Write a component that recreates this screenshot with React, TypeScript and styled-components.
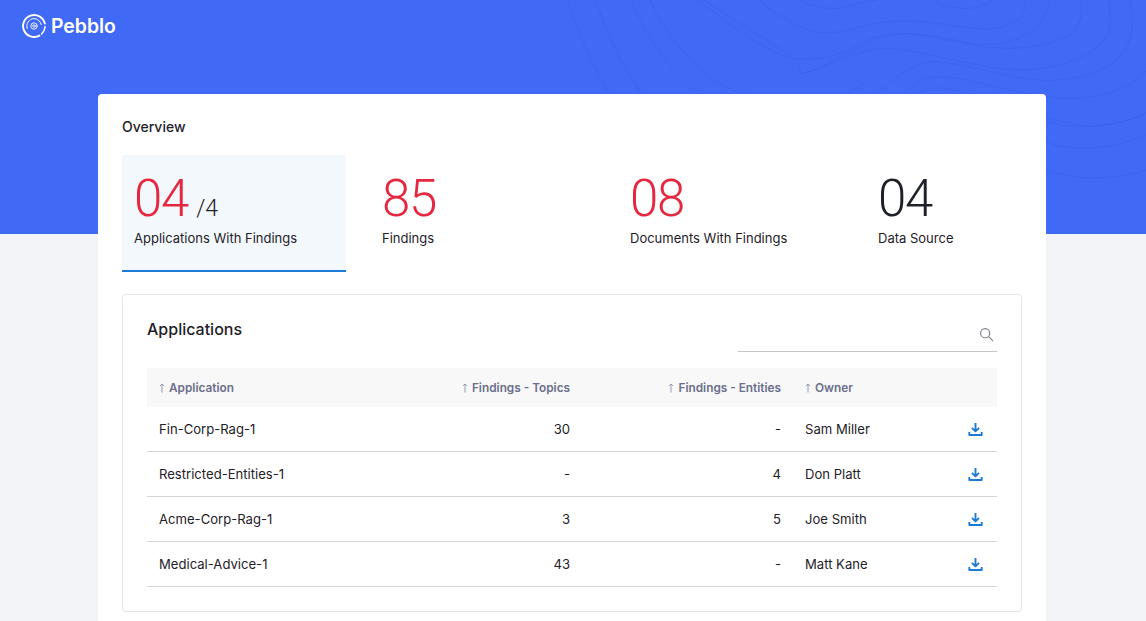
import React from 'react';
import styled, { createGlobalStyle } from 'styled-components';

const GlobalStyle = createGlobalStyle`
html, body {
  margin: 0;
  height: 100%;
  overflow: hidden;
}
body {
  font-family: Inter, "Liberation Sans", sans-serif;
  background: #f3f4f8;
  color: #1f2128;
}
`

const stats = [
    { value: '04', total: '/4', label: 'Applications With Findings', alert: true },
    { value: '85', label: 'Findings', alert: true },
    { value: '08', label: 'Documents With Findings', alert: true },
    { value: '04', label: 'Data Source', alert: false },
];

const apps = [
    { name: 'Fin-Corp-Rag-1', topics: '30', entities: '-', owner: 'Sam Miller' },
    { name: 'Restricted-Entities-1', topics: '-', entities: '4', owner: 'Don Platt' },
    { name: 'Acme-Corp-Rag-1', topics: '3', entities: '5', owner: 'Joe Smith' },
    { name: 'Medical-Advice-1', topics: '43', entities: '-', owner: 'Matt Kane' },
];

const Logo = () => (
    <LogoMark viewBox="0 0 24 24" fill="none" stroke="#fff" strokeLinecap="round">
        <path d="M17.5 21.6A11 11 0 1 1 22.8 9.5" strokeWidth="1.9" />
        <path d="M23 12.5a11 11 0 0 1-3.4 7.4" strokeWidth="1.4" />
        <path d="M5.2 14.5A7.4 7.4 0 0 1 12 4.6a7.4 7.4 0 0 1 7.2 6" strokeWidth="1" />
        <circle cx="12" cy="12" r="3.2" strokeWidth="0.9" />
        <circle cx="12" cy="12" r="1.3" strokeWidth="0.8" />
    </LogoMark>
);

const Contours = () => (
    <ContourSvg viewBox="0 0 1568 642" fill="none" stroke="#3358dc" strokeOpacity="0.55" strokeWidth="1.4">
        <path d="M20 0C50 90 90 190 150 280" />
        <path d="M95 0C130 100 170 190 240 280" />
        <path d="M190 0C230 90 280 180 370 250L490 282" />
        <path d="M240 0C280 80 340 170 430 225C500 265 640 290 730 270C770 258 800 235 825 210" />
        <path d="M370 0C450 60 520 120 600 150C650 165 720 160 780 130C830 100 880 85 930 90C1010 95 1090 130 1180 115C1260 100 1300 60 1310 0" />
        <path d="M385 0C450 40 520 90 590 130C640 165 650 195 640 198C710 185 780 130 860 100C920 85 1000 90 1090 115C1170 135 1280 140 1370 90C1400 60 1395 30 1395 0" />
        <path d="M530 0C580 40 640 80 700 88C760 92 830 55 930 55C1000 55 1100 85 1170 75C1220 65 1250 40 1245 0" />
        <path d="M640 0C670 15 710 25 750 22C800 10 830 0 850 0" />
        <path d="M1000 0C1040 25 1110 35 1160 0" />
        <path d="M640 198C700 190 780 135 860 130C940 125 1050 170 1200 185C1320 195 1450 150 1470 80C1475 50 1470 20 1468 0" />
        <path d="M820 280C870 230 930 170 1000 165C1080 165 1180 210 1300 215C1420 215 1520 170 1530 80C1533 50 1528 20 1525 0" />
        <path d="M895 280C930 240 960 205 1010 205C1090 205 1200 250 1340 262C1450 268 1540 230 1568 190" />
        <path d="M925 280C950 250 970 235 1010 235C1100 240 1220 300 1390 335C1470 345 1540 315 1568 300" />
        <path d="M1300 325C1370 345 1470 345 1568 305" />
        <path d="M1300 380C1370 405 1470 405 1568 360" />
        <path d="M1300 455C1370 480 1470 485 1568 455" />
    </ContourSvg>
);

const ArrowUp = () => (
    <SortIcon viewBox="0 0 6 10" fill="none" stroke="#8d90a8" strokeWidth="0.9">
        <path d="M3 9.5V1M1 3l2-2 2 2" />
    </SortIcon>
);

const SearchIcon = () => (
    <SearchSvg viewBox="0 0 16 16" fill="none" stroke="#7f8188" strokeWidth="1.2" strokeLinecap="round">
        <circle cx="6.6" cy="6.6" r="4.9" />
        <path d="M10.3 10.3L14.6 14.6" />
    </SearchSvg>
);

const DownloadIcon = () => (
    <DownloadSvg viewBox="0 0 16 16" fill="none" stroke="#1d7ad6" strokeWidth="2" strokeLinejoin="round">
        <path d="M8 1v8.6M4.2 6.2L8 10l3.8-3.8" />
        <path d="M1.4 10.6v3.2h13.2v-3.2" />
    </DownloadSvg>
);

export default function App() {
    return (
        <Page>
            <GlobalStyle />
            <Contours />
            <Header>
                <Logo />
                <Brand>Pebblo</Brand>
            </Header>
            <Card>
                <Heading>Overview</Heading>
                <Stats>
                    {stats.map((stat, id) => (
                        <Stat key={stat.label} active={id === 0}>
                            <Numbers>
                                <Value alert={stat.alert}>{stat.value}</Value>
                                {stat.total && <Total>{stat.total}</Total>}
                            </Numbers>
                            <StatLabel>{stat.label}</StatLabel>
                        </Stat>
                    ))}
                </Stats>
                <Panel>
                    <PanelHead>
                        <PanelTitle>Applications</PanelTitle>
                        <Search>
                            <SearchIcon />
                        </Search>
                    </PanelHead>
                    <Table>
                        <colgroup>
                            <col width="253" />
                            <col width="182" />
                            <col width="211" />
                            <col width="157" />
                            <col width="47" />
                        </colgroup>
                        <thead>
                            <tr>
                                <Th><ArrowUp />Application</Th>
                                <Th right><ArrowUp />Findings - Topics</Th>
                                <Th right><ArrowUp />Findings - Entities</Th>
                                <Th><ArrowUp />Owner</Th>
                                <Th />
                            </tr>
                        </thead>
                        <tbody>
                            {apps.map((app) => (
                                <tr key={app.name}>
                                    <Td>{app.name}</Td>
                                    <Td right>{app.topics}</Td>
                                    <Td right>{app.entities}</Td>
                                    <Td>{app.owner}</Td>
                                    <Td><DownloadIcon /></Td>
                                </tr>
                            ))}
                        </tbody>
                    </Table>
                </Panel>
            </Card>
        </Page>
    );
}

const Page = styled.div`
position: relative;
height: 100vh;
overflow: hidden;
background: linear-gradient(#4069f5 234px, #f3f4f8 234px);
`
const ContourSvg = styled.svg`
position: absolute;
top: 0;
left: 560px;
width: 586px;
height: 240px;
`
const Header = styled.header`
position: relative;
height: 94px;
box-sizing: border-box;
padding: 14px 22px 0;
display: flex;
align-items: flex-start;
gap: 5px;
`
const LogoMark = styled.svg`
width: 24px;
height: 24px;
`
const Brand = styled.span`
font-size: 19.4px;
line-height: 24px;
font-weight: 600;
color: #fff;
`
const Card = styled.main`
position: relative;
width: 948px;
margin-left: 98px;
box-sizing: border-box;
padding: 24px;
background: #fff;
border-radius: 4px;
min-height: 600px;
`
const Heading = styled.h2`
margin: 0 0 19px;
font-size: 14px;
line-height: 18px;
font-weight: 500;
`
const Stats = styled.div`
display: grid;
grid-template-columns: 224px 224px 224px 1fr;
gap: 24px;
margin-bottom: 22px;
`
const Stat = styled.div<{ active: boolean }>`
height: 117px;
box-sizing: border-box;
padding: 19px 12px 0;
border-radius: 3px 3px 0 0;
background: ${props => props.active ? '#f3f8fc' : 'transparent'};
border-bottom: 2px solid ${props => props.active ? '#1d7ad6' : 'transparent'};
`
const Numbers = styled.div`
display: flex;
align-items: baseline;
gap: 8px;
height: 50px;
`
const Value = styled.span<{ alert: boolean }>`
font-family: Roboto, sans-serif;
font-size: 51px;
line-height: 50px;
font-weight: 300;
letter-spacing: -1.2px;
color: ${props => props.alert ? '#e5283f' : '#1f2128'};
`
const Total = styled.span`
font-family: Roboto, sans-serif;
font-size: 23px;
font-weight: 300;
color: #1f2128;
`
const StatLabel = styled.div`
margin-top: 5px;
font-size: 13px;
line-height: 18px;
`
const Panel = styled.section`
box-sizing: border-box;
height: 318px;
padding: 24px;
border: 1px solid #e4e5e8;
border-radius: 4px;
`
const PanelHead = styled.div`
display: flex;
justify-content: space-between;
align-items: flex-start;
height: 49px;
`
const PanelTitle = styled.h3`
margin: 0;
font-size: 16px;
line-height: 21px;
font-weight: 500;
`
const Search = styled.div`
width: 259px;
height: 33px;
box-sizing: border-box;
display: flex;
justify-content: flex-end;
align-items: flex-start;
padding: 8px 3px 0 0;
border-bottom: 1px solid #c4c5c9;
`
const SearchSvg = styled.svg`
width: 15px;
height: 15px;
`
const Table = styled.table`
width: 850px;
table-layout: fixed;
border-collapse: collapse;
`
const Th = styled.th<{ right?: boolean }>`
height: 39px;
padding: 0 12px;
background: #f8f8f9;
font-size: 11.8px;
font-weight: 600;
color: #6b6f8c;
text-align: ${props => props.right ? 'right' : 'left'};
`
const SortIcon = styled.svg`
width: 6px;
height: 10px;
margin-right: 4px;
vertical-align: -1px;
`
const Td = styled.td<{ right?: boolean }>`
height: 44px;
padding: 0 12px;
font-size: 13.1px;
border-bottom: 1px solid #d4d5d8;
text-align: ${props => props.right ? 'right' : 'left'};
`
const DownloadSvg = styled.svg`
display: block;
width: 15px;
height: 15px;
margin-left: 6px;
`
